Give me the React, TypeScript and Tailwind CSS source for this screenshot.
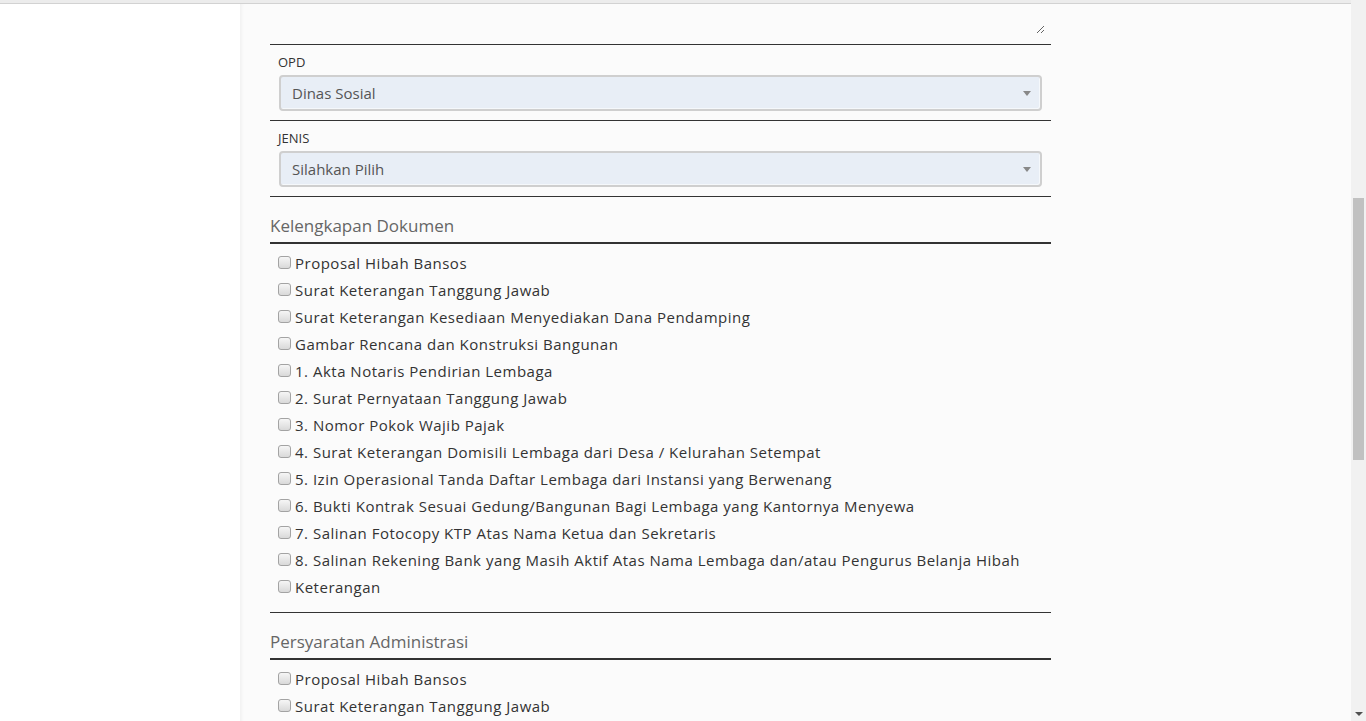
import React from 'react';

const dokumen = [
  'Proposal Hibah Bansos',
  'Surat Keterangan Tanggung Jawab',
  'Surat Keterangan Kesediaan Menyediakan Dana Pendamping',
  'Gambar Rencana dan Konstruksi Bangunan',
  '1. Akta Notaris Pendirian Lembaga',
  '2. Surat Pernyataan Tanggung Jawab',
  '3. Nomor Pokok Wajib Pajak',
  '4. Surat Keterangan Domisili Lembaga dari Desa / Kelurahan Setempat',
  '5. Izin Operasional Tanda Daftar Lembaga dari Instansi yang Berwenang',
  '6. Bukti Kontrak Sesuai Gedung/Bangunan Bagi Lembaga yang Kantornya Menyewa',
  '7. Salinan Fotocopy KTP Atas Nama Ketua dan Sekretaris',
  '8. Salinan Rekening Bank yang Masih Aktif Atas Nama Lembaga dan/atau Pengurus Belanja Hibah',
  'Keterangan',
];

const administrasi = ['Proposal Hibah Bansos', 'Surat Keterangan Tanggung Jawab'];

function SelectField({ label, value }: { label: string; value: string }) {
  return (
    <div className="border-b border-[#333] px-[9px] pt-[8px] pb-[9px]">
      <label className="block text-[13px] leading-[18px] text-[#333] -ml-px">{label}</label>
      <div className="mt-[4px] flex h-[36px] items-center justify-between rounded-[4px] border-2 border-[#cfcfcf] bg-[#e8eef6] pl-[11px] pr-[9px] shadow-[inset_-1px_-1px_0_#f5f8fb]">
        <span className="text-[15px] text-[#555]">{value}</span>
        <span className="h-0 w-0 border-x-[4px] border-t-[5px] border-x-transparent border-t-[#888]" />
      </div>
    </div>
  );
}

function CheckList({ title, items }: { title: string; items: string[] }) {
  return (
    <div>
      <h3 className="border-b-2 border-[#333] pt-[17px] pb-[4px] text-[17px] leading-[24px] text-[#666]">
        {title}
      </h3>
      <div className="pt-[6px] pb-[11px]">
        {items.map((item) => (
          <label key={item} className="flex h-[27px] items-center gap-[4px] pl-[8px]">
            <input
              type="checkbox"
              className="mb-[2px] h-[13px] w-[13px] shrink-0 appearance-none rounded-[3px] border border-[#a3a3a3] bg-gradient-to-b from-[#f6f6f6] to-[#d9d9d9]"
            />
            <span className="text-[15px] tracking-[0.5px] text-[#333]">{item}</span>
          </label>
        ))}
      </div>
    </div>
  );
}

export default function App() {
  return (
    <div className="flex h-screen overflow-hidden bg-white font-['Open_Sans',sans-serif]">
      <div className="flex flex-1 flex-col">
        <div className="h-[3px] shrink-0 bg-[#ececec]" />
        <div className="h-px shrink-0 bg-[#d2d2d2]" />
        <div className="flex flex-1">
          <div className="w-[240px] shrink-0 bg-white" />
          <div className="flex-1 bg-[#fbfbfb] pl-[30px] shadow-[inset_4px_0_4px_-3px_rgba(0,0,0,0.06)]">
            <div className="w-[781px]">
              <div className="border-b border-[#333] pb-[10px]">
                <textarea className="block h-[30px] w-[775px] border-0 bg-transparent outline-none" />
              </div>
              <SelectField label="OPD" value="Dinas Sosial" />
              <SelectField label="JENIS" value="Silahkan Pilih" />
              <CheckList title="Kelengkapan Dokumen" items={dokumen} />
              <div className="border-t border-[#333]" />
              <CheckList title="Persyaratan Administrasi" items={administrasi} />
            </div>
          </div>
        </div>
      </div>
      <div className="flex w-[15px] shrink-0 flex-col items-center bg-[#f1f1f1] pt-[198px]">
        <div className="h-[262px] w-[11px] shrink-0 bg-[#c1c1c1]" />
        <div className="flex-1" />
        <span className="mb-[5px] h-0 w-0 border-x-[4px] border-t-[4px] border-x-transparent border-t-[#505050]" />
      </div>
    </div>
  );
}
